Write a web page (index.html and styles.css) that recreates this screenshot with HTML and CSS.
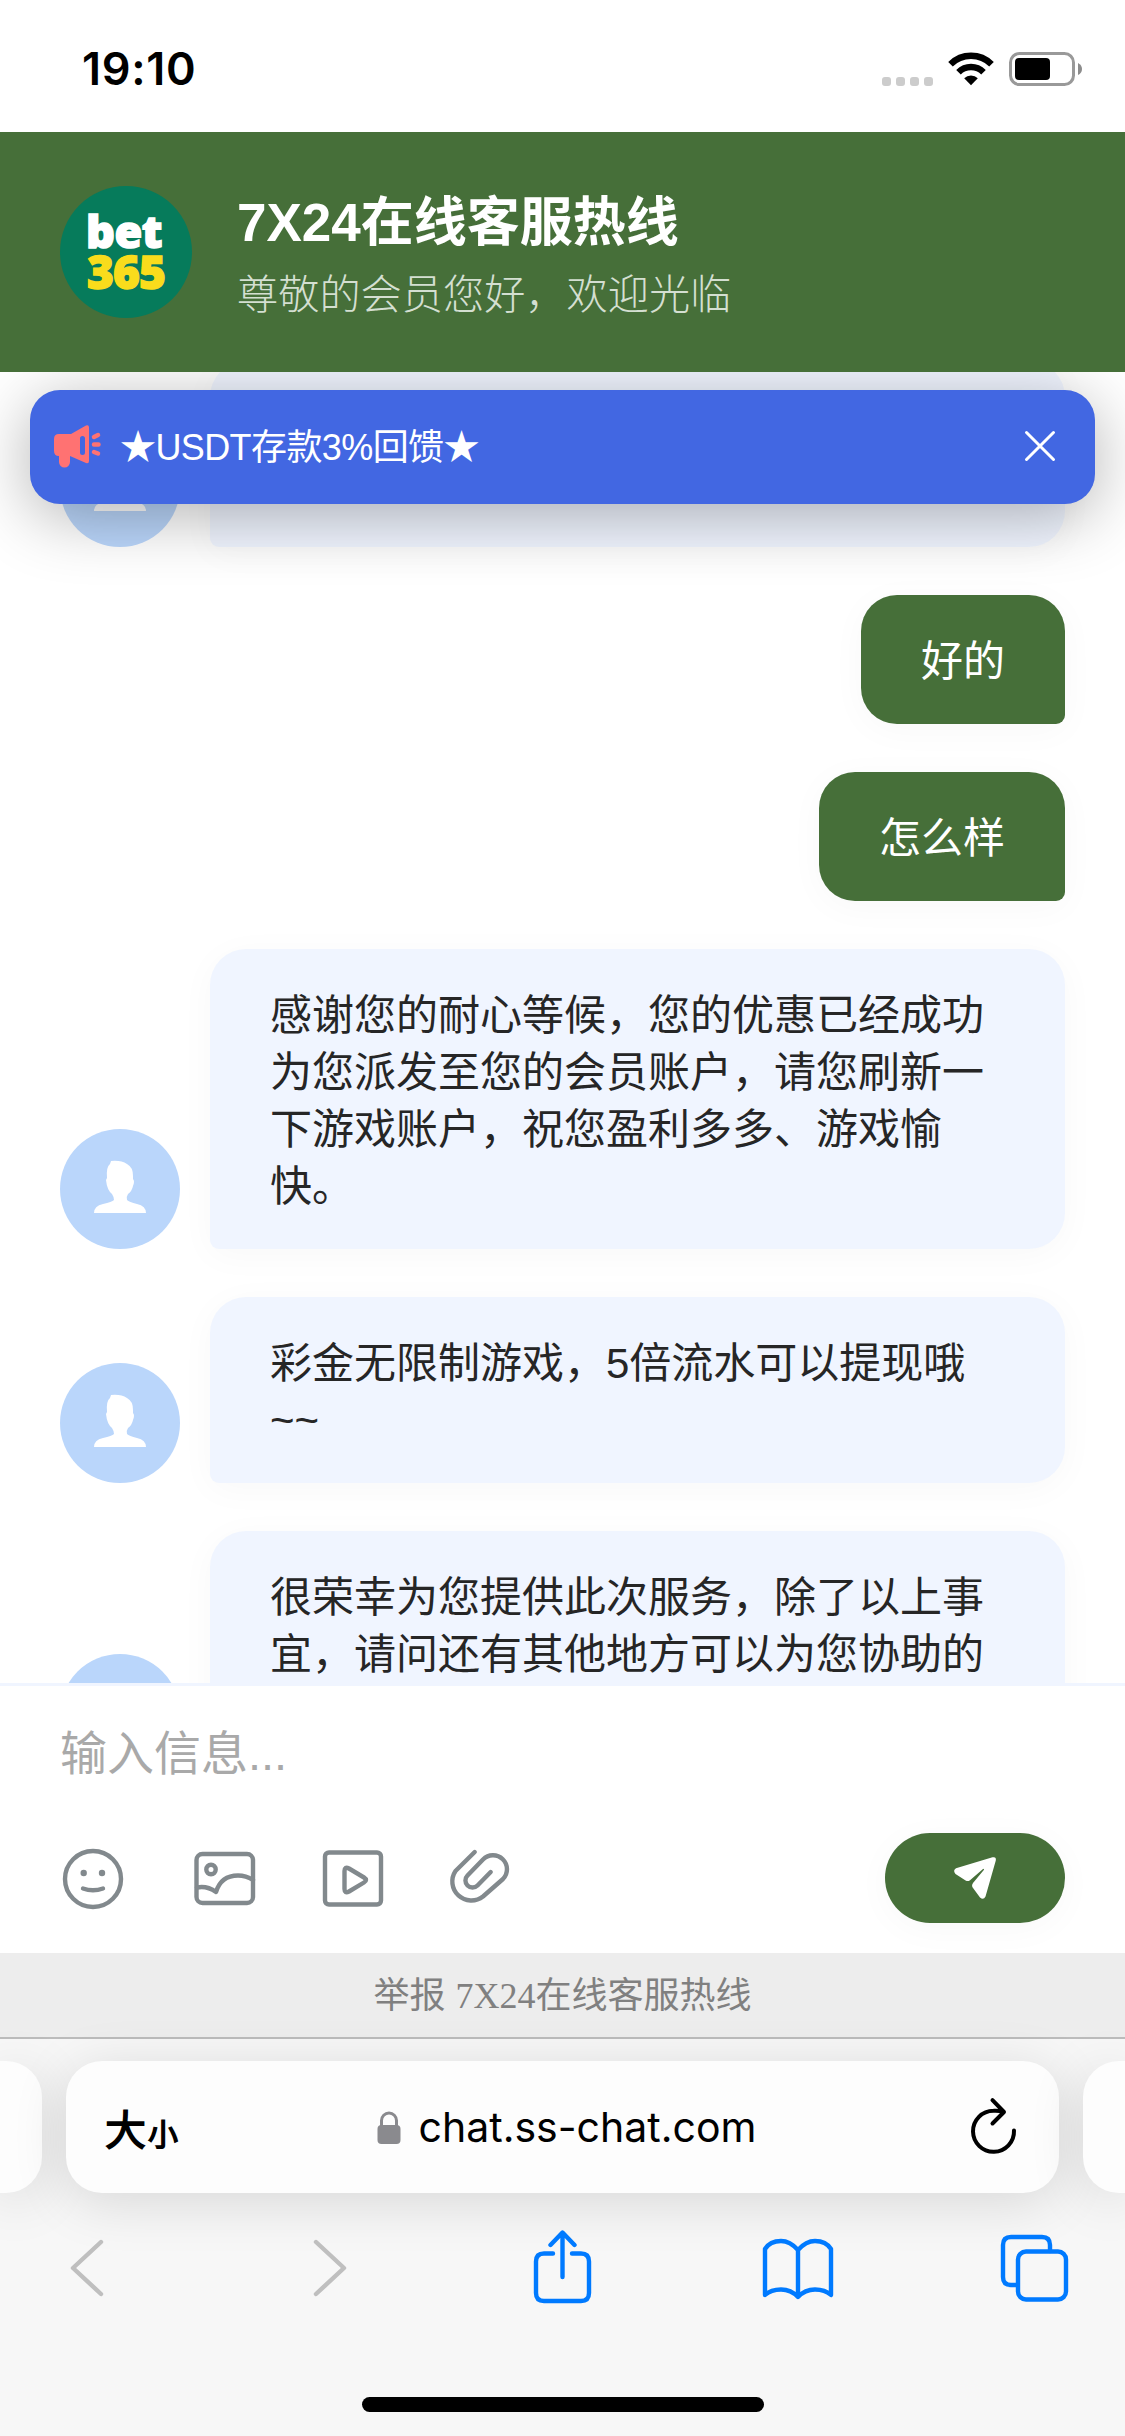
FILE: index.html
```
<!DOCTYPE html>
<html lang="zh-CN">
<head>
  <meta charset="UTF-8" />
  <meta name="viewport" content="width=device-width, initial-scale=1.0"/>
  <title>7X24在线客服热线</title>
  <link rel="stylesheet" href="styles.css">
</head>
<body>
  <div class="phone">
    <div class="status-bar">
      <span class="time">19:10</span>
      <div class="status-icons">
        <div class="signal"><i></i><i></i><i></i><i></i></div>
        <svg class="wifi" width="46" height="34" viewBox="0 0 46 34">
          <path d="M2.5 12.2a29 29 0 0 1 41 0" fill="none" stroke="#000" stroke-width="6.5"/>
          <path d="M10.5 20.2a17.8 17.8 0 0 1 25 0" fill="none" stroke="#000" stroke-width="6.5"/>
          <path d="M16.2 26.3a9.6 9.6 0 0 1 13.6 0L23 33.2z"/>
        </svg>
        <svg class="battery" width="74" height="34" viewBox="0 0 74 34">
          <rect x="1.5" y="1.5" width="63" height="31" rx="9" fill="none" stroke="#999" stroke-width="3"/>
          <rect x="6" y="6" width="35" height="22" rx="4"/>
          <path d="M69 11q4 2 4 6t-4 6z" fill="#8c8c8c"/>
        </svg>
      </div>
    </div>

    <header class="header">
      <div class="logo">
        <span class="logo-top">bet</span>
        <span class="logo-bottom">365</span>
      </div>
      <div class="header-text">
        <h1>7X24在线客服热线</h1>
        <p>尊敬的会员您好，欢迎光临</p>
      </div>
    </header>

    <main class="chat">
      <div class="notice">
        <svg class="horn" width="47" height="42" viewBox="0 0 47 42">
          <path fill-rule="evenodd" d="M5 9H17L32 .5Q35-.6 35 2.500V36Q35 39 32 38L16 31V37A5.500 5.500 0 0 1 5 37V31Q0 31 0 26V14Q0 9 5 9ZM28.500 11a2.500 2.500 0 0 0-2.500 2.500V27.500a2.500 2.500 0 0 0 5 0V13.500A2.500 2.500 0 0 0 28.500 11Z"/>
          <path class="rays" d="M40 12l4-2M40 19.500h4.500M40 27l4 1.500"/>
        </svg>
        <span class="notice-text">★USDT存款3%回馈★</span>
        <svg class="close" width="30" height="30" viewBox="0 0 30 30"><path d="M1.500 1.500l27 27M28.500 1.500l-27 27"/></svg>
      </div>

      <div class="row">
        <div class="avatar"><svg viewBox="0 0 120 120"><use href="#person"/></svg></div>
        <div class="bubble lines-2"></div>
      </div>
      <div class="row mine"><div class="bubble">好的</div></div>
      <div class="row mine"><div class="bubble">怎么样</div></div>
      <div class="row">
        <div class="avatar"><svg viewBox="0 0 120 120"><use href="#person"/></svg></div>
        <div class="bubble">感谢您的耐心等候，您的优惠已经成功为您派发至您的会员账户，请您刷新一下游戏账户，祝您盈利多多、游戏愉快。</div>
      </div>
      <div class="row">
        <div class="avatar"><svg viewBox="0 0 120 120"><use href="#person"/></svg></div>
        <div class="bubble">彩金无限制游戏，5倍流水可以提现哦~~</div>
      </div>
      <div class="row">
        <div class="avatar"><svg viewBox="0 0 120 120"><use href="#person"/></svg></div>
        <div class="bubble lines-3">很荣幸为您提供此次服务，除了以上事宜，请问还有其他地方可以为您协助的</div>
      </div>
    </main>

    <section class="composer">
      <div class="placeholder">输入信息...</div>
      <div class="tools">
        <svg class="tool" viewBox="0 0 64 64">
          <circle cx="32" cy="33" r="28"/>
          <circle class="dot" cx="22.700" cy="27" r="3.200"/>
          <circle class="dot" cx="41" cy="27" r="3.200"/>
          <path d="M22 42.500q10 3.500 20 0"/>
        </svg>
        <svg class="tool" viewBox="0 0 64 64">
          <rect x="5.500" y="8" width="56.500" height="49" rx="6"/>
          <circle cx="20" cy="23.500" r="4.700"/>
          <path d="M6 41.500Q16 39.500 25 46Q30 29.500 47 29.500Q55 29.500 62 34"/>
        </svg>
        <svg class="tool" viewBox="0 0 64 64">
          <rect x="4" y="6.500" width="56" height="52" rx="4"/>
          <path d="M23.500 25q0-5 4.500-2.500l15 9q4 2.500 0 5l-15 9q-4.500 2.500-4.500-2.500z"/>
        </svg>
        <svg class="tool" viewBox="1 0 64 64">
          <path d="M24.700 6L5.500 25A19 19 0 0 0 33 50.500L53 33A13.800 13.800 0 0 0 33 13.500L17.500 29.500A7 7 0 0 0 27.500 39.500L40.700 26"/>
        </svg>
        <button class="send">
          <svg width="42" height="42" viewBox="0 0 42 42"><path d="M38.500.3Q42.500-.6 41.800 3.500L31.500 39.500Q29.500 43.500 26 40.500L18.300 30Q17.500 28 19 26L30.200 12.500L29.300 11.800L16 23.200Q14 24.600 12 23.700L1.500 17Q-1.500 13.500 2 11.300Z"/></svg>
        </button>
      </div>
    </section>

    <div class="report">举报 <span>7X24</span>在线客服热线</div>

    <footer class="browser">
      <div class="tabs">
        <div class="tab side"></div>
        <div class="tab address">
          <div class="text-size"><span>大</span><small>小</small></div>
          <div class="url">
            <svg width="24" height="33" viewBox="0 0 24 33">
              <path d="M4.500 15V9.500a7.500 7.500 0 0 1 15 0V15" fill="none" stroke="#8a8a8e" stroke-width="3"/>
              <rect x=".5" y="14" width="23" height="19" rx="4" fill="#8a8a8e"/>
            </svg>
            <span>chat.ss-chat.com</span>
          </div>
          <svg class="reload" width="46" height="56" viewBox="0 0 46 56">
            <path d="M43 32.500A20.500 20.500 0 1 1 22.500 12.800Q28 12.500 32.500 14M21.500 2.200L33 14L21.500 25.500"/>
          </svg>
        </div>
        <div class="tab side"></div>
      </div>
      <nav class="toolbar">
        <svg class="nav off" viewBox="0 0 76 76"><path d="M39 12L11 38l28 26"/></svg>
        <svg class="nav off" viewBox="-10 0 76 76"><path d="M10 12l28 26L10 64"/></svg>
        <svg class="nav" viewBox="5 0 76 76"><path d="M28 23.500H19q-8 0-8 8V63q0 8 8 8H56q8 0 8-8V31.500q0-8-8-8H47M37.500 47V3M25.500 15L37.500 2.500L49.500 15"/></svg>
        <svg class="nav" viewBox="3 0 76 76"><path d="M38 20Q30 11 21 11Q10 11 5 19V65Q11 59.500 21 59.500Q31 59.500 38 67Q45 59.500 55 59.500Q65 59.500 71 65V19Q66 11 55 11Q46 11 38 20V66"/></svg>
        <svg class="nav" viewBox="0 0 76 76"><path d="M19.500 55H14q-8 0-8-8V15q0-8 8-8H45q8 0 8 8v6"/><rect x="21" y="21.500" width="48" height="48" rx="8"/></svg>
      </nav>
      <div class="home-bar"></div>
    </footer>
  </div>

  <svg class="defs" width="0" height="0">
    <symbol id="person" viewBox="0 0 120 120">
      <path fill="#fff" d="M51 32Q61 31 67 35Q73 38 73 47V50Q75 52 73 57Q72 62 68 65Q66 68 67 71Q69 73 77 75Q86 77 86 84H34Q34 77 43 75Q52 73 54 71Q54 68 52 65Q47 61 46 51L47 49Q46 38 50 35Z"/>
    </symbol>
  </svg>
</body>
</html>
```
FILE: styles.css
```
* {
  box-sizing: border-box;
}

body {
  margin: 0;
  background: #fff;
  font-family: 'Liberation Sans', 'Noto Sans CJK SC', sans-serif;
}

h1, p {
  margin: 0;
}

svg {
  display: block;
  overflow: visible;
}

.phone {
  width: 1125px;
  height: 2436px;
  display: flex;
  flex-direction: column;
  overflow: hidden;
}

/* status bar */
.status-bar {
  height: 132px;
  padding: 5px 42px 0 82px;
  display: flex;
  justify-content: space-between;
  align-items: center;
}

.time {
  font-family: Inter, sans-serif;
  font-size: 45px;
  font-weight: 600;
  letter-spacing: 0.7px;
}

.status-icons {
  display: flex;
  align-items: flex-end;
  height: 34px;
}

.signal {
  display: flex;
  gap: 5px;
  margin-right: 15px;
}

.signal i {
  width: 9px;
  height: 9px;
  border-radius: 3px;
  background: #ccc;
}

.battery {
  margin-left: 15px;
}

/* header */
.header {
  height: 240px;
  padding: 0 60px;
  display: flex;
  align-items: center;
  gap: 45px;
  background: #466f39;
  color: #fff;
}

.logo {
  width: 132px;
  height: 132px;
  padding-top: 25px;
  border-radius: 50%;
  background: #067b5b;
  text-align: center;
  font-family: 'Open Sans', sans-serif;
  font-weight: 800;
  line-height: 40px;
}

.logo span {
  display: block;
  -webkit-text-stroke: 1.5px currentColor;
}

.logo-top {
  padding-right: 4px;
  font-size: 45px;
  letter-spacing: -0.5px;
}

.logo-bottom {
  font-size: 46px;
  letter-spacing: -1px;
  color: #f9dc1c;
}

.header-text {
  padding-top: 8px;
}

h1 {
  font-size: 53px;
  line-height: 78px;
}

.header p {
  font-size: 41.2px;
  line-height: 66px;
  font-weight: 300;
  color: #d4dfd1;
}

/* chat */
.chat {
  position: relative;
  height: 1311px;
  padding: 0 60px;
  overflow: hidden;
  display: flex;
  flex-direction: column;
  gap: 48px;
  justify-content: flex-start;
}

.notice {
  position: absolute;
  top: 18px;
  left: 30px;
  right: 30px;
  height: 114px;
  padding: 0 40px 2px 24px;
  display: flex;
  align-items: center;
  border-radius: 30px;
  background: #4267e2;
  color: #fff;
  font-size: 36px;
  box-shadow: 0 12px 66px rgba(0, 0, 0, 0.3);
  z-index: 2;
}

.horn {
  fill: #ff7272;
}

.rays {
  fill: none;
  stroke: #ff7272;
  stroke-width: 4.5;
  stroke-linecap: round;
}

.notice-text {
  flex: 1;
  margin-left: 19px;
  padding-bottom: 4px;
  letter-spacing: -0.6px;
}

.close {
  fill: none;
  stroke: #fff;
  stroke-width: 3;
  stroke-linecap: round;
}

.row {
  display: flex;
  align-items: flex-end;
  gap: 30px;
  flex-shrink: 0;
}

.notice + .row {
  margin-top: -11px;
}

.row.mine {
  justify-content: flex-end;
}

.avatar {
  width: 120px;
  height: 120px;
  flex-shrink: 0;
  border-radius: 50%;
  background: #bad6fb;
}

.bubble {
  padding: 38px 60px 34px;
  flex: 1;
  border-radius: 36px 36px 36px 9px;
  background: #f0f5ff;
  color: #262626;
  font-size: 42px;
  line-height: 57px;
  box-shadow: 0 6px 36px rgba(0, 0, 0, 0.03);
}

.lines-2 {
  min-height: 186px;
}

.lines-3 {
  min-height: 243px;
}

.mine .bubble {
  flex: none;
  border-radius: 36px 36px 9px 36px;
  background: #466f39;
  color: #fff;
}

/* message input */
.composer {
  position: relative;
  height: 270px;
  padding: 35px 60px 0;
  border-top: 3px solid #f0f5ff;
  background: #fff;
}

.placeholder {
  height: 66px;
  line-height: 66px;
  font-size: 47px;
  color: #a9a9a9;
}

.tools {
  margin-top: 46px;
  display: flex;
  align-items: center;
  gap: 66px;
  padding-left: 1px;
}

.tool {
  width: 64px;
  height: 64px;
  fill: none;
  stroke: #82898d;
  stroke-width: 4.4;
  stroke-linecap: round;
  stroke-linejoin: round;
}

.tool .dot {
  fill: #82898d;
  stroke: none;
}

.send {
  width: 180px;
  height: 90px;
  margin-left: auto;
  padding: 0 0 0 69px;
  border: none;
  border-radius: 45px;
  background: #466f39;
  box-shadow: 0 6px 36px rgba(0, 0, 0, 0.03);
}

.send svg {
  fill: #fff;
}

.report {
  height: 84px;
  background: #ededed;
  color: #808080;
  font-size: 36px;
  line-height: 85px;
  text-align: center;
}

.report span {
  font-family: 'Liberation Serif', serif;
}

/* browser bar */
.browser {
  flex: 1;
  border-top: 2px solid #bcbcbc;
  background: #f7f7f7;
}

.tabs {
  margin-top: 22px;
  display: flex;
  gap: 24px;
}

.tab {
  height: 132px;
  background: #fdfdfd;
  box-shadow: 0 9px 54px rgba(0, 0, 0, 0.13);
}

.side {
  width: 42px;
  border-radius: 0 36px 36px 0;
}

.side:last-child {
  border-radius: 36px 0 0 36px;
}

.address {
  flex: 1;
  padding: 0 42px 0 39px;
  display: flex;
  align-items: center;
  justify-content: space-between;
  border-radius: 36px;
}

.text-size {
  width: 90px;
  font-size: 41px;
  -webkit-text-stroke: 1.5px #000;
}

.text-size small {
  margin-left: 2px;
  font-size: 30px;
}

.url {
  display: flex;
  align-items: center;
  gap: 18px;
  margin-left: 11px;
  font-family: Inter, sans-serif;
  font-size: 41px;
}

.reload {
  margin-left: 44px;
  margin-top: -3px;
  fill: none;
  stroke: #000;
  stroke-width: 4;
  stroke-linecap: round;
  stroke-linejoin: round;
}

.toolbar {
  margin-top: 37px;
  padding: 0 52px 0 62px;
  display: flex;
  justify-content: space-between;
}

.nav {
  width: 76px;
  height: 76px;
  fill: none;
  stroke: #007aff;
  stroke-width: 4.4;
  stroke-linecap: round;
  stroke-linejoin: round;
}

.off {
  stroke: #bfbfbf;
}

.home-bar {
  width: 402px;
  height: 15px;
  margin: 91px auto 0;
  border-radius: 8px;
  background: #000;
}

.defs {
  position: absolute;
}
```
